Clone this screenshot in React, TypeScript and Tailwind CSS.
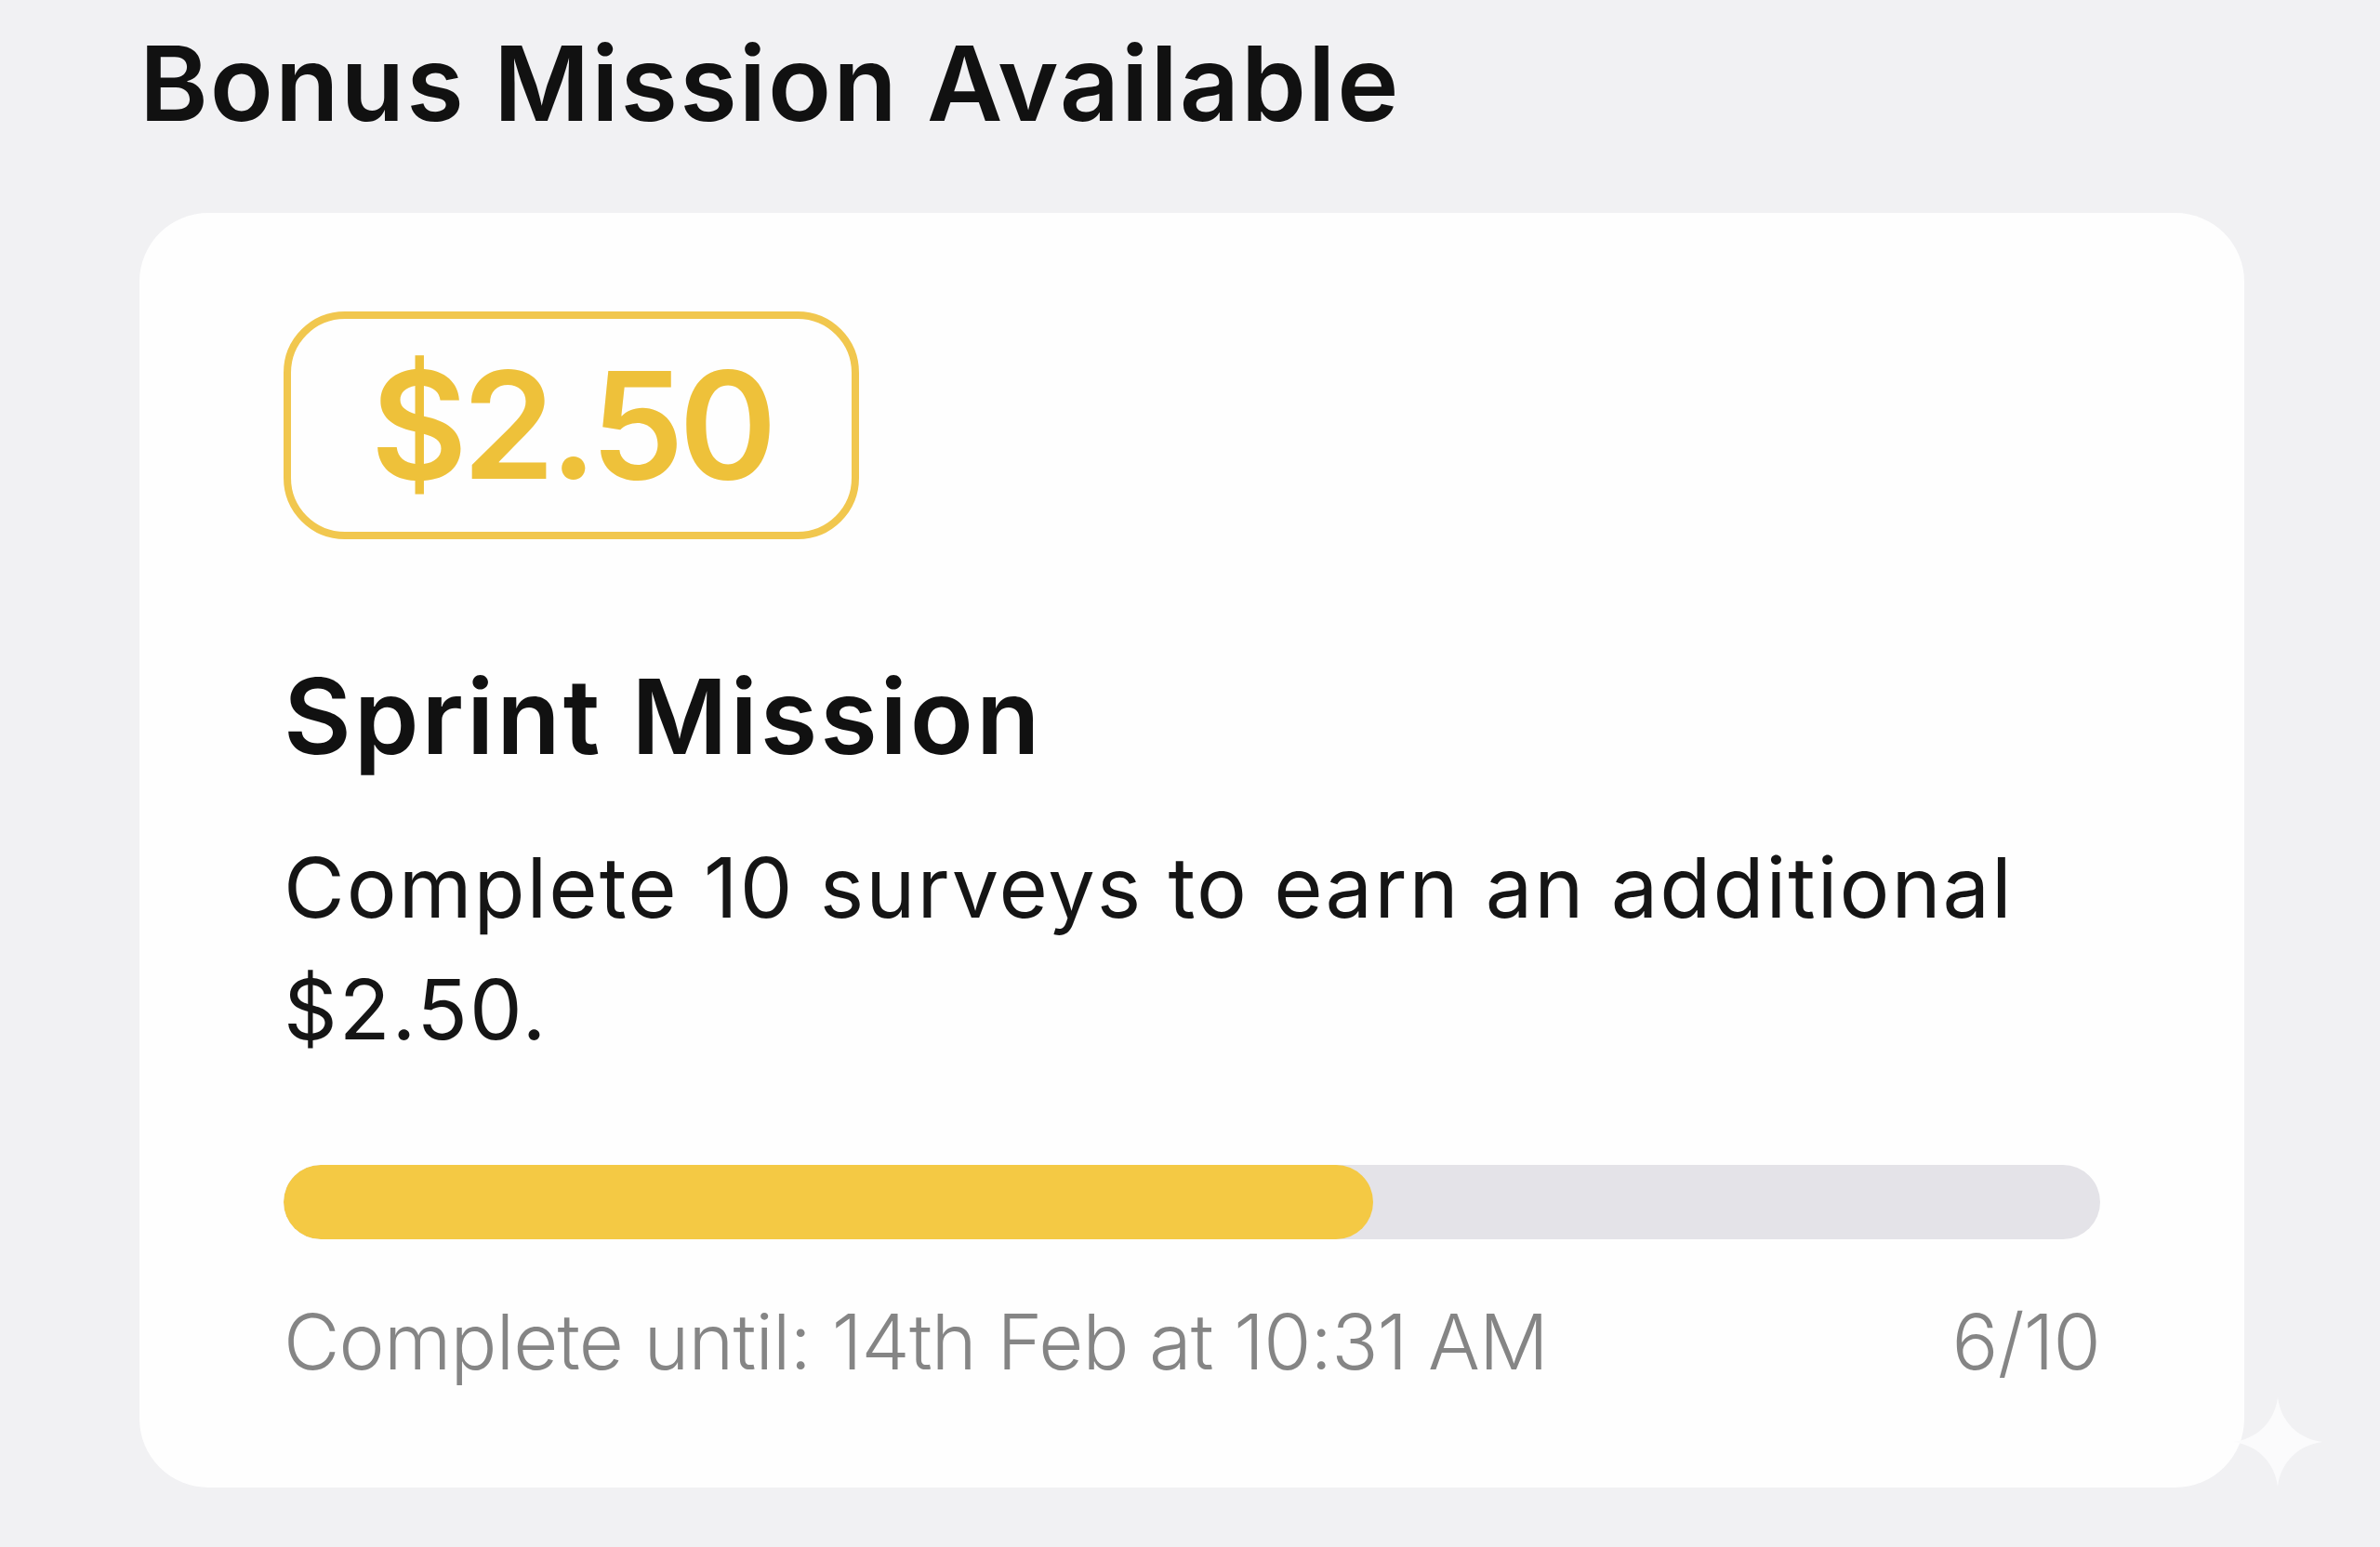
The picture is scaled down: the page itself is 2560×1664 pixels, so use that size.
const mission = {
  reward: '$2.50',
  title: 'Sprint Mission',
  description: 'Complete 10 surveys to earn an additional $2.50.',
  deadline: '14th Feb at 10:31 AM',
  done: 6,
  total: 10,
};

function Sparkle() {
  return (
    <svg className="h-[96px] w-[96px]" viewBox="0 0 24 24" fill="#fbfbfc">
      <path d="M12 0 C12.8 6.5 17.5 11.2 24 12 C17.5 12.8 12.8 17.5 12 24 C11.2 17.5 6.5 12.8 0 12 C6.5 11.2 11.2 6.5 12 0 Z" />
    </svg>
  );
}

export default function App() {
  const pct = (mission.done / mission.total) * 100;

  return (
    <div className="relative min-h-screen w-full bg-[#f1f1f3] font-['Inter','Noto_Sans',sans-serif] text-[#111111]">
      <div className="px-[150px] pt-[22px]">
        <h1 className="text-[112px] font-semibold leading-[1.21] tracking-[0.018em]">Bonus Mission Available</h1>

        <div className="mt-[71px] w-[2264px] rounded-[74px] bg-[#fefefe] px-[155px] pt-[106px] pb-[107px]">
          <div className="flex h-[245px] w-[619px] items-center justify-center rounded-[66px] border-[8px] border-[#f1c74e]">
            <span className="text-[160px] font-semibold leading-none tracking-[-0.035em] text-[#eec13a]">{mission.reward}</span>
          </div>

          <h2 className="mt-[123px] text-[112px] font-semibold leading-[1.21] tracking-[0.026em]">{mission.title}</h2>

          <p className="mt-[51px] max-w-[1950px] text-[90px] leading-[131px] font-normal tracking-[0.022em] text-[#151515]">
            {mission.description}
          </p>

          <div className="mt-[102px] h-[80px] w-full overflow-hidden rounded-full bg-[#e4e3e8]">
            <div className="h-full rounded-full bg-[#f4c944]" style={{ width: `${pct}%` }} />
          </div>

          <div className="mt-[60px] flex items-center justify-between text-[83px] font-light leading-[1.21] tracking-[-0.01em] text-[#858585]">
            <span>Complete until: {mission.deadline}</span>
            <span>
              {mission.done}/{mission.total}
            </span>
          </div>
        </div>
      </div>

      <div className="absolute left-[2402px] top-[1503px]">
        <Sparkle />
      </div>
    </div>
  );
}
